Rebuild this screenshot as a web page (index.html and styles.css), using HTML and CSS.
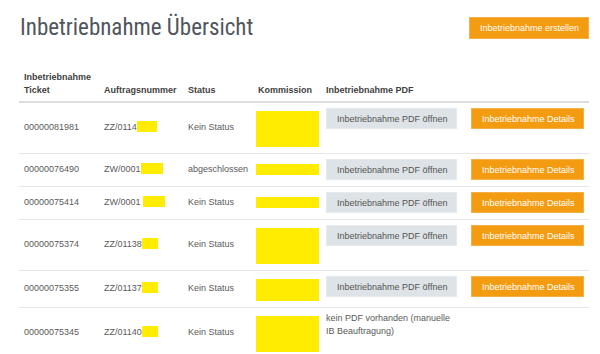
FILE: index.html
```html
<!DOCTYPE html>
<html lang="de">
<head>
    <meta charset="UTF-8">
    <title>Inbetriebnahme Übersicht</title>
    <link rel="stylesheet" href="styles.css">
</head>
<body>
    <div class="page">
        <div class="page-head">
            <h1>Inbetriebnahme Übersicht</h1>
            <button class="btn btn-orange">Inbetriebnahme erstellen</button>
        </div>

        <table class="ib-table">
            <colgroup>
                <col class="c-ticket">
                <col class="c-auftrag">
                <col class="c-status">
                <col class="c-kom">
                <col class="c-pdf">
                <col class="c-act">
            </colgroup>
            <thead>
                <tr>
                    <th>Inbetriebnahme<br>Ticket</th>
                    <th>Auftragsnummer</th>
                    <th>Status</th>
                    <th>Kommission</th>
                    <th>Inbetriebnahme PDF</th>
                    <th></th>
                </tr>
            </thead>
            <tbody>
                <tr>
                    <td>00000081981</td>
                    <td>ZZ/0114<span class="mask m20"></span></td>
                    <td>Kein Status</td>
                    <td><div class="kom tall"></div></td>
                    <td class="top"><button class="btn btn-grey">Inbetriebnahme PDF öffnen</button></td>
                    <td class="top"><button class="btn btn-orange">Inbetriebnahme Details</button></td>
                </tr>
                <tr>
                    <td>00000076490</td>
                    <td>ZW/0001<span class="mask m22"></span></td>
                    <td>abgeschlossen</td>
                    <td><div class="kom small"></div></td>
                    <td class="top"><button class="btn btn-grey">Inbetriebnahme PDF öffnen</button></td>
                    <td class="top"><button class="btn btn-orange">Inbetriebnahme Details</button></td>
                </tr>
                <tr>
                    <td>00000075414</td>
                    <td>ZW/0001<span class="mask m22 off"></span></td>
                    <td>Kein Status</td>
                    <td><div class="kom small"></div></td>
                    <td class="top"><button class="btn btn-grey">Inbetriebnahme PDF öffnen</button></td>
                    <td class="top"><button class="btn btn-orange">Inbetriebnahme Details</button></td>
                </tr>
                <tr>
                    <td>00000075374</td>
                    <td>ZZ/01138<span class="mask m16"></span></td>
                    <td>Kein Status</td>
                    <td><div class="kom tall"></div></td>
                    <td class="top"><button class="btn btn-grey">Inbetriebnahme PDF öffnen</button></td>
                    <td class="top"><button class="btn btn-orange">Inbetriebnahme Details</button></td>
                </tr>
                <tr>
                    <td>00000075355</td>
                    <td>ZZ/01137<span class="mask m16"></span></td>
                    <td>Kein Status</td>
                    <td><div class="kom mid"></div></td>
                    <td class="top"><button class="btn btn-grey">Inbetriebnahme PDF öffnen</button></td>
                    <td class="top"><button class="btn btn-orange">Inbetriebnahme Details</button></td>
                </tr>
                <tr>
                    <td>00000075345</td>
                    <td>ZZ/01140<span class="mask m16"></span></td>
                    <td>Kein Status</td>
                    <td><div class="kom tall"></div></td>
                    <td class="top note">kein PDF vorhanden (manuelle IB Beauftragung)</td>
                    <td></td>
                </tr>
            </tbody>
        </table>
    </div>
</body>
</html>
```

FILE: styles.css
```css
* {
    box-sizing: border-box;
    margin: 0;
    padding: 0;
}

body {
    font-family: "Liberation Sans", Arial, sans-serif;
    font-size: 9px;
    color: #5a5a5a;
    background: #fff;
}

.page {
    padding: 17px 11px 0 19px;
    width: 600px;
}

.page-head {
    display: flex;
    align-items: center;
    justify-content: space-between;
    height: 22px;
    margin-bottom: 27px;
}

h1 {
    font-family: "Roboto Condensed", "Liberation Sans Narrow", "Arial Narrow", sans-serif;
    font-stretch: condensed;
    font-weight: normal;
    font-size: 23px;
    color: #50565c;
    line-height: 22px;
    padding-left: 1px;
}

.btn {
    font-family: "Liberation Sans", Arial, sans-serif;
    font-size: 9px;
    height: 21px;
    padding: 0 10px;
    border-radius: 0;
    cursor: pointer;
    white-space: nowrap;
}

.btn-orange {
    background-color: #f39c12;
    border: 1px solid #f6b04a;
    color: #fff;
}

.page-head .btn-orange {
    height: 22px;
    width: 120px;
}

.btn-grey {
    background-color: #dde3e6;
    border: 1px solid #e6eaec;
    color: #555;
    width: 131px;
}

.ib-table .btn-orange {
    width: 113px;
}

.ib-table {
    width: 570px;
    border-collapse: collapse;
    table-layout: fixed;
}

.c-ticket { width: 80px; }
.c-auftrag { width: 84px; }
.c-status { width: 70px; }
.c-kom { width: 68px; }
.c-pdf { width: 145px; }
.c-act { width: 123px; }

th {
    text-align: left;
    vertical-align: bottom;
    font-weight: bold;
    color: #3f3f3f;
    line-height: 13px;
    padding: 5px 5px 4px;
    border-bottom: 2px solid #dddddd;
}

td {
    vertical-align: middle;
    line-height: 13px;
    padding: 5px 5px 6px;
    border-top: 1px solid #e8e8e8;
}

td.top {
    vertical-align: top;
}

td.note {
    padding-top: 4px;
}

.mask {
    display: inline-block;
    height: 11px;
    vertical-align: -2px;
    background-color: #ffec00;
}

.m20 { width: 20px; }
.m22 { width: 22px; }
.m16 { width: 16px; }
.off { margin-left: 2px; }

.kom {
    width: 63px;
    margin-left: -2px;
    background-color: #ffec00;
}

.kom.tall {
    height: 36px;
    margin-top: 3px;
}

.kom.mid {
    height: 22px;
    margin-top: 3px;
}

.kom.small {
    height: 11px;
}
```
